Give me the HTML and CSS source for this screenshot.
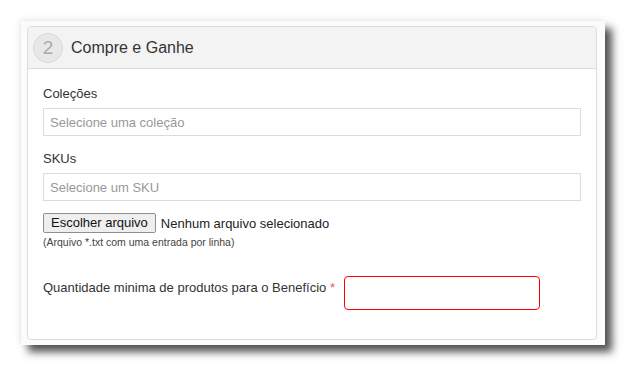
FILE: index.html
```html
<!DOCTYPE html>
<html lang="pt">
<head>
<meta charset="utf-8">
<link rel="stylesheet" href="styles.css">
</head>
<body>
<div class="frame">
  <div class="card">
    <div class="card-header">
      <span class="step">2</span>
      <span class="title">Compre e Ganhe</span>
    </div>
    <div class="card-body">
      <div class="field">
        <label class="label">Coleções</label>
        <div class="input"><span class="placeholder">Selecione uma coleção</span></div>
      </div>
      <div class="field">
        <label class="label">SKUs</label>
        <div class="input"><span class="placeholder">Selecione um SKU</span></div>
      </div>
      <div class="file-row">
        <span class="file-btn">Escolher arquivo</span>
        <span class="file-name">Nenhum arquivo selecionado</span>
      </div>
      <div class="help">(Arquivo *.txt com uma entrada por linha)</div>
      <div class="qty-row">
        <label class="label qty-label">Quantidade minima de produtos para o Benefício <span class="req">*</span></label>
        <div class="qty-input"></div>
      </div>
    </div>
  </div>
</div>
</body>
</html>
```
FILE: styles.css
```css
html, body {
  margin: 0;
  padding: 0;
  background: #fff;
}
body {
  font-family: "Liberation Sans", Arial, sans-serif;
  color: #333;
  padding: 21px 0 0 21px;
  height: 367px;
  box-sizing: border-box;
}
.frame {
  position: relative;
  width: 584px;
  height: 324px;
  box-sizing: border-box;
  background: #fbfbfb;
  padding: 5px 0 0 6px;
  box-shadow: 7px 7px 8px rgba(0, 0, 0, 0.68), -2px -2px 6px rgba(0, 0, 0, 0.07);
}
.card {
  width: 570px;
  height: 314px;
  box-sizing: border-box;
  background: #fff;
  border: 1px solid #dcdcdc;
  border-radius: 4px;
  overflow: hidden;
}
.card-header {
  height: 42px;
  box-sizing: border-box;
  background: #f3f3f3;
  border-bottom: 1px solid #dcdcdc;
  display: flex;
  align-items: center;
  padding-left: 5px;
}
.step {
  width: 30px;
  height: 30px;
  box-sizing: border-box;
  border-radius: 50%;
  background: #e8e8e8;
  border: 1px solid #d8d8d8;
  color: #aaa;
  font-size: 19px;
  display: flex;
  align-items: center;
  justify-content: center;
  margin-right: 8px;
}
.title {
  font-size: 16px;
  color: #333;
}
.card-body {
  padding: 16px 15px 0 15px;
}
.field {
  margin-bottom: 14px;
}
.label {
  display: block;
  font-size: 13px;
  line-height: 18px;
  color: #333;
  margin-bottom: 5px;
}
.input {
  height: 28px;
  box-sizing: border-box;
  border: 1px solid #dcdcdc;
  display: flex;
  align-items: center;
  padding-left: 6px;
}
.placeholder {
  font-size: 13px;
  color: #999;
}
.file-row {
  display: flex;
  align-items: center;
  margin-top: -2px;
}
.file-btn {
  height: 20px;
  box-sizing: border-box;
  border: 1px solid #8f8f8f;
  background: #efefef;
  font-size: 13px;
  line-height: 18px;
  padding: 0 7px;
  color: #111;
  border-radius: 2px;
}
.file-name {
  font-size: 13px;
  margin-left: 5px;
  color: #222;
}
.help {
  font-size: 10.5px;
  color: #444;
  margin-top: 3px;
}
.qty-row {
  display: flex;
  align-items: flex-start;
  margin-top: 28px;
}
.qty-label {
  margin: 0;
  padding-top: 3px;
}
.req {
  color: #e35b5b;
}
.qty-input {
  width: 196px;
  height: 34px;
  box-sizing: border-box;
  border: 1px solid #f00;
  border-radius: 4px;
  margin-left: 9px;
}
```
